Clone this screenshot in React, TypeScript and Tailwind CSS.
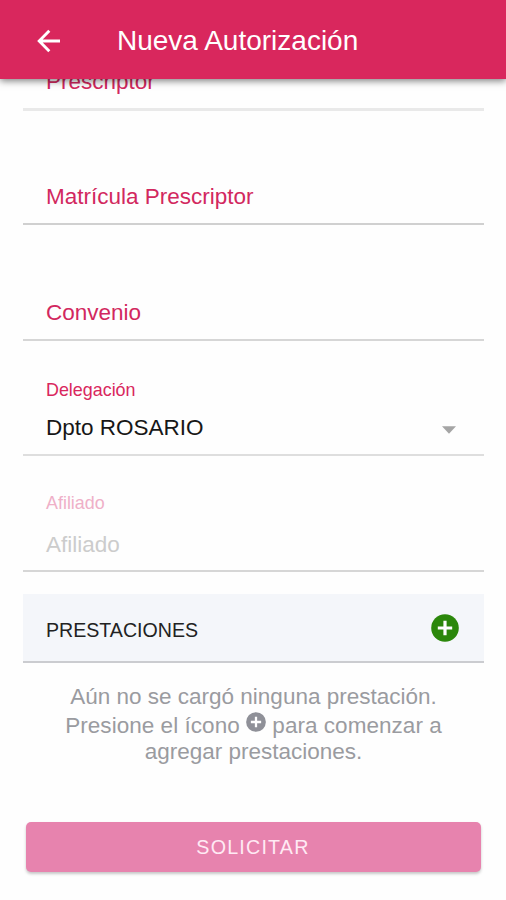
import React from "react";

function AddCircle({ className, stroke }: { className: string; stroke: number }) {
  return (
    <svg viewBox="0 0 28 28" className={className} aria-hidden="true">
      <circle cx="14" cy="14" r="13.8" fill="currentColor" />
      <path d="M14 6.8v14.4M6.8 14h14.4" stroke="#fff" strokeWidth={stroke} fill="none" />
    </svg>
  );
}

export default function App() {
  return (
    <div className="flex h-[900px] w-[506px] flex-col overflow-hidden bg-[#fefefe] font-['Liberation_Sans',Arial,sans-serif] text-[22.5px]">
      <header className="z-10 flex h-[79px] shrink-0 items-center bg-[#d9275d] pl-[37px] text-white shadow-[0_2px_7px_rgba(0,0,0,0.5)]">
        <svg viewBox="0 0 24 24" className="mt-[3px] size-6" fill="none" stroke="currentColor" strokeWidth="2.9">
          <path d="M12.3 1.7 2.2 12l10.1 10.3M2.2 12H23" />
        </svg>
        <h1 className="ml-[56px] mt-[2px] text-[28px] leading-8">Nueva Autorización</h1>
      </header>

      <main className="flex flex-1 flex-col pl-[23px] pr-[22px]">
        <label className="flex h-[32px] shrink-0 items-end border-b-[3px] border-[#e9e9e9] pb-[13px] pl-[23px] leading-[26px] text-[#d2285f]">
          Prescriptor
        </label>
        <label className="flex h-[114px] items-end border-b-2 border-[#d0d0d0] pb-[13px] pl-[23px] leading-[26px] text-[#d2285f]">
          Matrícula Prescriptor
        </label>
        <label className="flex h-[116px] items-end border-b-2 border-[#d6d6d6] pb-[13px] pl-[23px] leading-[26px] text-[#d2285f]">
          Convenio
        </label>

        <div className="flex h-[115px] flex-col border-b-2 border-[#dedede] px-[23px] pt-[38px]">
          <span className="text-[17.9px] leading-[22px] text-[#d9275d]">Delegación</span>
          <div className="mt-[14px] flex items-center justify-between leading-[26px] text-[#171717]">
            <span>Dpto ROSARIO</span>
            <svg viewBox="0 0 14 8" className="mr-[5px] mt-[3px] h-2 w-[14px]">
              <path d="M0 .3h14L7 7.7Z" fill="#a5a5a5" />
            </svg>
          </div>
        </div>

        <div className="flex h-[116px] flex-col border-b-2 border-[#d6d6d6] px-[23px] pt-[36px]">
          <span className="text-[17.9px] leading-[22px] text-[#efb0c8]">Afiliado</span>
          <span className="mt-[18px] leading-[26px] text-[#cccccc]">Afiliado</span>
        </div>

        <div className="mt-[22px] flex h-[69px] items-center justify-between border-b-2 border-[#cbccd0] bg-[#f4f6fa] pl-[23px] pr-[25px] text-[19.6px] text-[#222]">
          <span className="mt-[7px]">PRESTACIONES</span>
          <AddCircle className="size-7 text-[#2b870b]" stroke={3.2} />
        </div>

        <p className="mt-[21px] flex flex-col items-center text-[#9a9ba0]">
          <span className="leading-[26px]">Aún no se cargó ninguna prestación.</span>
          <span className="leading-[32px] tracking-[0.04px]">
            Presione el ícono <AddCircle className="inline-block size-5 align-[1px] text-[#8f9098]" stroke={3.2} /> para comenzar a
          </span>
          <span className="-mt-[3px] leading-[26px]">agregar prestaciones.</span>
        </p>

        <button className="mx-[3px] mt-[57px] h-[50px] rounded-[5px] bg-[#e783ae] pr-[1px] pt-[2px] text-[19.7px] tracking-[1.2px] text-[#ffeaf4] shadow-[0_2px_3px_rgba(0,0,0,0.22)]">
          SOLICITAR
        </button>
      </main>
    </div>
  );
}
